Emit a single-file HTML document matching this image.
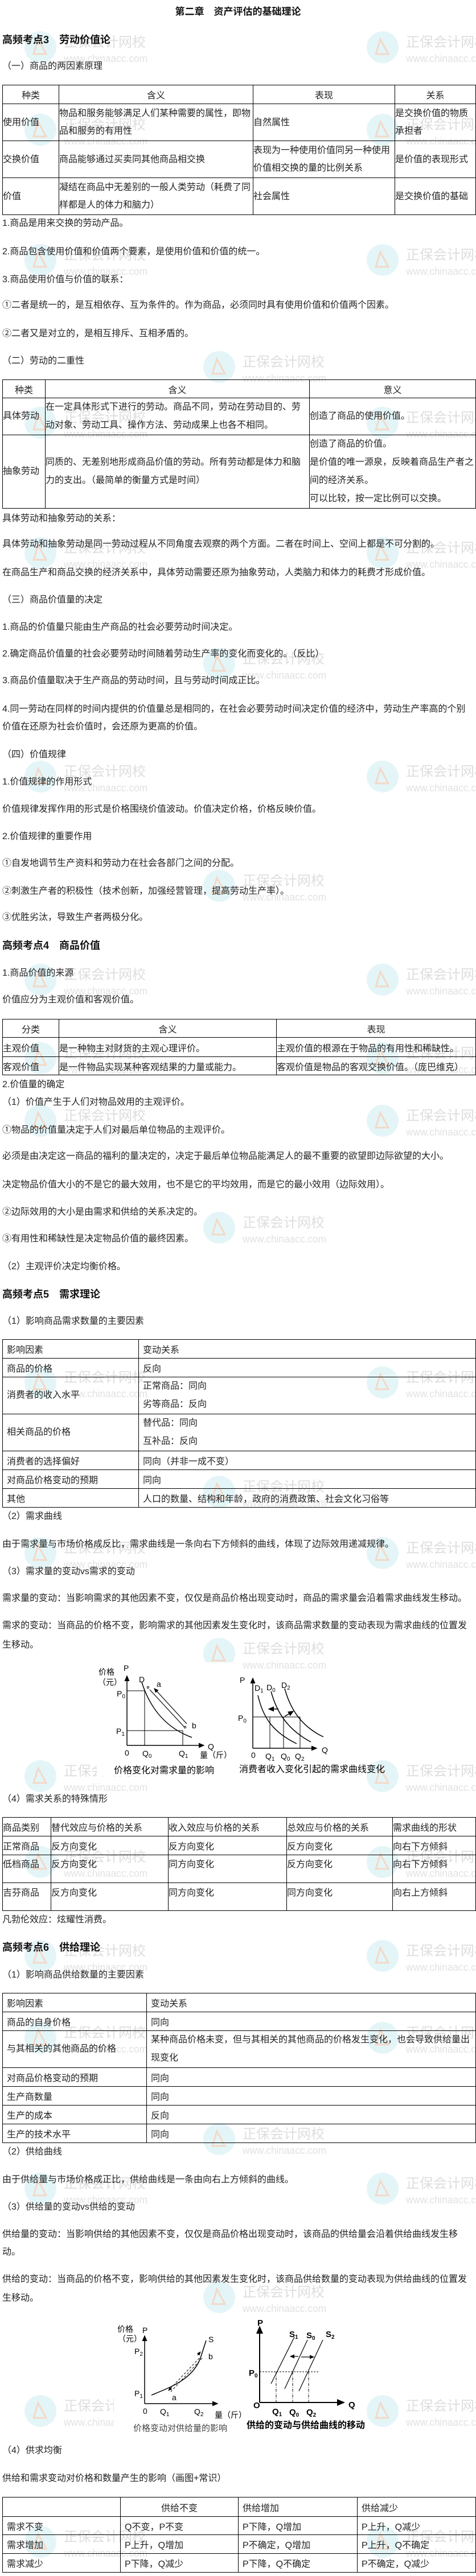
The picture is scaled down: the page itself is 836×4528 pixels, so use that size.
<!DOCTYPE html>
<html lang="zh"><head><meta charset="utf-8">
<style>
html,body{margin:0;padding:0;background:#fff}
#w{position:relative;width:836px;height:4528px;overflow:hidden;font-family:"Liberation Sans","Noto Sans CJK SC",sans-serif;color:#222;font-size:16px}
.p{position:absolute;left:4px;line-height:24px;white-space:nowrap}
.h{position:absolute;left:4px;line-height:26px;white-space:nowrap;font-weight:bold;font-size:18px;color:#111}
table{position:absolute;left:4px;width:832px;border-collapse:collapse;table-layout:fixed;font-size:16px}
td{border:1px solid #000;padding:0;white-space:nowrap;vertical-align:middle;overflow:hidden}
.c{text-align:center}
.pl td{padding-left:7px}
svg{position:absolute;left:0;top:0}
</style></head><body><div id="w">
<svg width="836" height="4528" viewBox="0 0 836 4528" font-family="Liberation Sans,Noto Sans CJK SC,sans-serif">
<defs>
<g id="wm">
<circle cx="0" cy="0" r="28" fill="#e4f5f8"/>
<path d="M-4,-14 L10,12 L-12,12 Z" fill="none" stroke="#f3d9c8" stroke-width="3"/>
<text x="41" y="-1" font-size="24" fill="#dedede">正保会计网校</text>
<text x="41" y="26" font-size="18" fill="#e2e2e2" textLength="147" lengthAdjust="spacingAndGlyphs">www.chinaacc.com</text>
</g>
<marker id="ar" markerWidth="8" markerHeight="8" refX="6" refY="4" orient="auto"><path d="M0,1 L7,4 L0,7 Z" fill="#000"/></marker>
</defs>
<g>
<use href="#wm" x="71" y="83"/><use href="#wm" x="672" y="83"/>
<use href="#wm" x="71" y="228"/><use href="#wm" x="672" y="228"/>
<use href="#wm" x="71" y="457"/><use href="#wm" x="672" y="457"/>
<use href="#wm" x="385" y="645"/>
<use href="#wm" x="71" y="743"/><use href="#wm" x="672" y="743"/>
<use href="#wm" x="71" y="972"/><use href="#wm" x="672" y="972"/>
<use href="#wm" x="385" y="1167"/>
<use href="#wm" x="71" y="1365"/><use href="#wm" x="672" y="1365"/>
<use href="#wm" x="385" y="1557"/>
<use href="#wm" x="71" y="1722"/><use href="#wm" x="672" y="1722"/>
<use href="#wm" x="71" y="1860"/><use href="#wm" x="672" y="1860"/>
<use href="#wm" x="71" y="1970"/><use href="#wm" x="672" y="1970"/>
<use href="#wm" x="385" y="2158"/>
<use href="#wm" x="71" y="2430"/><use href="#wm" x="672" y="2430"/>
<use href="#wm" x="385" y="2622"/>
<use href="#wm" x="71" y="2730"/><use href="#wm" x="672" y="2730"/>
<use href="#wm" x="385" y="2907"/>
<use href="#wm" x="71" y="3122"/><use href="#wm" x="672" y="3122"/>
<use href="#wm" x="71" y="3273"/><use href="#wm" x="672" y="3273"/>
<use href="#wm" x="71" y="3438"/><use href="#wm" x="672" y="3438"/>
<use href="#wm" x="71" y="3582"/><use href="#wm" x="672" y="3582"/>
<use href="#wm" x="385" y="3760"/>
<use href="#wm" x="71" y="3847"/><use href="#wm" x="672" y="3847"/>
<use href="#wm" x="385" y="4038"/>
<use href="#wm" x="71" y="4238"/><use href="#wm" x="672" y="4238"/>
<use href="#wm" x="71" y="4468"/><use href="#wm" x="672" y="4468"/>
</g>
<!-- Demand graph 1 -->
<rect x="170" y="2922" width="240" height="200" fill="#fff"/>
<g stroke="#000" fill="none" stroke-width="1.5">
<line x1="223" y1="3068" x2="223" y2="2946" marker-end="url(#ar)"/>
<line x1="223" y1="3068" x2="358" y2="3068" marker-end="url(#ar)"/>
<line x1="223" y1="2972" x2="254" y2="2972" stroke-width="1"/>
<line x1="254" y1="2972" x2="254" y2="3068" stroke-width="1"/>
<line x1="223" y1="3042" x2="321" y2="3042" stroke-width="1"/>
<line x1="321" y1="3042" x2="321" y2="3068" stroke-width="1"/>
<path d="M249,2957 C262,2998 288,3036 337,3054"/>
<line x1="263" y1="2970" x2="324" y2="3036" stroke-width="1.2"/>
<line x1="328" y1="3030" x2="271" y2="2968" stroke-width="1.2" marker-end="url(#ar)"/>
</g>
<circle cx="260" cy="2966" r="1.6" fill="none" stroke="#000"/>
<circle cx="325" cy="3036" r="1.6" fill="none" stroke="#000"/>
<g font-size="14" fill="#000">
<text x="173" y="2944">价格</text><text x="172" y="2962">（元）</text>
<text x="217" y="2937">P</text><text x="244" y="2957">D</text>
<text x="275" y="2965">a</text><text x="337" y="3038">b</text>
<text x="205" y="2982">P<tspan font-size="10" dy="3">0</tspan></text>
<text x="204" y="3048">P<tspan font-size="10" dy="3">1</tspan></text>
<text x="219" y="3086">0</text>
<text x="250" y="3087">Q<tspan font-size="10" dy="3">0</tspan></text>
<text x="314" y="3087">Q<tspan font-size="10" dy="3">1</tspan></text>
<text x="365" y="3075">Q</text>
<text x="351" y="3090">量（斤）</text>
<text x="200" y="3117" font-size="16">价格变化对需求量的影响</text>
</g>
<!-- Demand graph 2 -->
<g stroke="#000" fill="none" stroke-width="1.5">
<line x1="444" y1="3073" x2="444" y2="2950" marker-end="url(#ar)"/>
<line x1="444" y1="3073" x2="556" y2="3073" marker-end="url(#ar)"/>
<line x1="444" y1="3018" x2="527" y2="3018" stroke-width="1"/>
<line x1="474" y1="3018" x2="474" y2="3073" stroke-width="1"/>
<line x1="498" y1="3018" x2="498" y2="3073" stroke-width="1"/>
<line x1="527" y1="3018" x2="527" y2="3073" stroke-width="1"/>
<path d="M453,2980 C462,3020 480,3045 521,3065"/>
<path d="M476,2973 C486,3010 505,3040 546,3062"/>
<path d="M500,2968 C510,3005 530,3035 568,3053"/>
<line x1="489" y1="3004" x2="472" y2="3004" marker-end="url(#ar)"/>
<line x1="500" y1="3017" x2="515" y2="3008" marker-end="url(#ar)"/>
</g>
<g font-size="14" fill="#000">
<text x="421" y="2958">P</text>
<text x="418" y="3025">P<tspan font-size="10" dy="3">0</tspan></text>
<text x="447" y="2972">D<tspan font-size="10" dy="3">1</tspan></text>
<text x="468" y="2971">D<tspan font-size="10" dy="3">0</tspan></text>
<text x="494" y="2967">D<tspan font-size="10" dy="3">2</tspan></text>
<text x="441" y="3090">0</text>
<text x="466" y="3092">Q<tspan font-size="10" dy="3">1</tspan></text>
<text x="493" y="3092">Q<tspan font-size="10" dy="3">0</tspan></text>
<text x="518" y="3092">Q<tspan font-size="10" dy="3">2</tspan></text>
<text x="565" y="3081">Q</text>
<text x="420" y="3115" font-size="16">消费者收入变化引起的需求曲线变化</text>
</g>
<!-- Supply graph 1 -->
<rect x="200" y="4075" width="230" height="205" fill="#fff"/>
<g stroke="#000" fill="none" stroke-width="1.5">
<line x1="254" y1="4225" x2="254" y2="4106" marker-end="url(#ar)"/>
<line x1="254" y1="4225" x2="382" y2="4225" marker-end="url(#ar)"/>
<path d="M266,4210 C300,4196 340,4182 353,4142 L362,4114"/>
<line x1="350" y1="4145" x2="296" y2="4202" stroke-dasharray="4,3" stroke-width="1" marker-end="url(#ar)"/>
<line x1="355" y1="4145" x2="300" y2="4204" stroke-dasharray="4,3" stroke-width="1"/>
<line x1="347" y1="4140" x2="352" y2="4134" stroke-width="1" marker-end="url(#ar)"/>
</g>
<g font-size="14" fill="#000">
<text x="206" y="4099">价格</text><text x="250" y="4101">P</text>
<text x="207" y="4116">（元）</text>
<text x="236" y="4138">P<tspan font-size="10" dy="3">2</tspan></text>
<text x="236" y="4212">P<tspan font-size="10" dy="3">1</tspan></text>
<text x="366" y="4117">S</text>
<text x="366" y="4147">b</text>
<text x="302" y="4219">a</text>
<text x="251" y="4243">0</text>
<text x="281" y="4244">Q<tspan font-size="10" dy="3">1</tspan></text>
<text x="341" y="4244">Q<tspan font-size="10" dy="3">2</tspan></text>
<text x="377" y="4250">量（斤）</text>
<text x="234" y="4273" font-size="15" fill="#444">价格变动对供给量的影响</text>
</g>
<!-- Supply graph 2 -->
<g stroke="#000" fill="none" stroke-width="2">
<line x1="456" y1="4223" x2="456" y2="4090" marker-end="url(#ar)"/>
<line x1="456" y1="4223" x2="604" y2="4223" marker-end="url(#ar)"/>
<line x1="456" y1="4169" x2="560" y2="4169" stroke-width="1" stroke-dasharray="3,2"/>
<line x1="485" y1="4169" x2="485" y2="4223" stroke-width="1" stroke-dasharray="5,2,1,2"/>
<line x1="514" y1="4169" x2="514" y2="4223" stroke-width="1" stroke-dasharray="5,2,1,2"/>
<line x1="542" y1="4169" x2="542" y2="4223" stroke-width="1" stroke-dasharray="5,2,1,2"/>
<line x1="517" y1="4108" x2="476" y2="4190" stroke-width="1.2"/>
<line x1="540" y1="4113" x2="500" y2="4199" stroke-width="1.2"/>
<line x1="567" y1="4113" x2="525" y2="4203" stroke-width="1.2"/>
<line x1="524" y1="4142" x2="510" y2="4142" stroke-width="1.2" marker-end="url(#ar)"/>
<line x1="529" y1="4143" x2="551" y2="4143" stroke-width="1.2" marker-end="url(#ar)"/>
</g>
<g font-size="15" font-weight="bold" fill="#000">
<text x="452" y="4088">P</text>
<text x="437" y="4176">P<tspan font-size="10" dy="3">0</tspan></text>
<text x="445" y="4233">O</text>
<text x="508" y="4108">S<tspan font-size="10" dy="3">1</tspan></text>
<text x="538" y="4110">S<tspan font-size="10" dy="3">0</tspan></text>
<text x="572" y="4108">S<tspan font-size="10" dy="3">2</tspan></text>
<text x="612" y="4232">Q</text>
<text x="478" y="4244">Q<tspan font-size="10" dy="3">1</tspan></text>
<text x="508" y="4245">Q<tspan font-size="10" dy="3">0</tspan></text>
<text x="538" y="4245">Q<tspan font-size="10" dy="3">2</tspan></text>
<text x="433" y="4268" font-size="16">供给的变动与供给曲线的移动</text>
</g>
</svg>

<div class="h" style="left:0;width:836px;text-align:center;top:8px;font-size:17px">第二章　资产评估的基础理论</div>
<div class="h" style="top:57px">高频考点3　劳动价值论</div>
<div class="p" style="top:105px">（一）商品的两因素原理</div>
<table style="top:149px">
<colgroup><col style="width:99px"><col style="width:341px"><col style="width:249px"><col style="width:142px"></colgroup>
<tr style="height:33px"><td class="c">种类</td><td class="c">含义</td><td class="c">表现</td><td class="c">关系</td></tr>
<tr style="height:65px;line-height:31px"><td>使用价值</td><td>物品和服务能够满足人们某种需要的属性，即物<br>品和服务的有用性</td><td>自然属性</td><td>是交换价值的物质<br>承担者</td></tr>
<tr style="height:65px;line-height:31px"><td>交换价值</td><td>商品能够通过买卖同其他商品相交换</td><td>表现为一种使用价值同另一种使用<br>价值相交换的量的比例关系</td><td>是价值的表现形式</td></tr>
<tr style="height:65px;line-height:31px"><td>价值</td><td>凝结在商品中无差别的一般人类劳动（耗费了同<br>样都是人的体力和脑力）</td><td>社会属性</td><td>是交换价值的基础</td></tr>
</table>
<div class="p" style="top:381px">1.商品是用来交换的劳动产品。</div>
<div class="p" style="top:431px">2.商品包含使用价值和价值两个要素，是使用价值和价值的统一。</div>
<div class="p" style="top:480px">3.商品使用价值与价值的联系：</div>
<div class="p" style="top:525px">①二者是统一的，是互相依存、互为条件的。作为商品，必须同时具有使用价值和价值两个因素。</div>
<div class="p" style="top:575px">②二者又是对立的，是相互排斥、互相矛盾的。</div>
<div class="p" style="top:623px">（二）劳动的二重性</div>
<table style="top:667px">
<colgroup><col style="width:75px"><col style="width:464px"><col style="width:292px"></colgroup>
<tr style="height:32px"><td class="c">种类</td><td class="c">含义</td><td class="c">意义</td></tr>
<tr style="height:65px;line-height:32px"><td>具体劳动</td><td>在一定具体形式下进行的劳动。商品不同，劳动在劳动目的、劳<br>动对象、劳动工具、操作方法、劳动成果上也各不相同。</td><td>创造了商品的使用价值。</td></tr>
<tr style="height:129px;line-height:32px"><td>抽象劳动</td><td>同质的、无差别地形成商品价值的劳动。所有劳动都是体力和脑<br>力的支出。（最简单的衡量方式是时间）</td><td>创造了商品的价值。<br>是价值的唯一源泉，反映着商品生产者之<br>间的经济关系。<br>可以比较，按一定比例可以交换。</td></tr>
</table>
<div class="p" style="top:900px">具体劳动和抽象劳动的关系：</div>
<div class="p" style="top:945px">具体劳动和抽象劳动是同一劳动过程从不同角度去观察的两个方面。二者在时间上、空间上都是不可分割的。</div>
<div class="p" style="top:995px">在商品生产和商品交换的经济关系中，具体劳动需要还原为抽象劳动，人类脑力和体力的耗费才形成价值。</div>
<div class="p" style="top:1043px">（三）商品价值量的决定</div>
<div class="p" style="top:1091px">1.商品的价值量只能由生产商品的社会必要劳动时间决定。</div>
<div class="p" style="top:1138px">2.确定商品价值量的社会必要劳动时间随着劳动生产率的变化而变化的。（反比）</div>
<div class="p" style="top:1185px">3.商品价值量取决于生产商品的劳动时间，且与劳动时间成正比。</div>
<div class="p" style="top:1235px">4.同一劳动在同样的时间内提供的价值量总是相同的，在社会必要劳动时间决定价值的经济中，劳动生产率高的个别</div>
<div class="p" style="top:1266px">价值在还原为社会价值时，会还原为更高的价值。</div>
<div class="p" style="top:1315px">（四）价值规律</div>
<div class="p" style="top:1363px">1.价值规律的作用形式</div>
<div class="p" style="top:1411px">价值规律发挥作用的形式是价格围绕价值波动。价值决定价格，价格反映价值。</div>
<div class="p" style="top:1459px">2.价值规律的重要作用</div>
<div class="p" style="top:1506px">①自发地调节生产资料和劳动力在社会各部门之间的分配。</div>
<div class="p" style="top:1555px">②刺激生产者的积极性（技术创新，加强经营管理，提高劳动生产率）。</div>
<div class="p" style="top:1601px">③优胜劣汰，导致生产者两极分化。</div>
<div class="h" style="top:1649px">高频考点4　商品价值</div>
<div class="p" style="top:1699px">1.商品价值的来源</div>
<div class="p" style="top:1746px">价值应分为主观价值和客观价值。</div>
<table style="top:1791px">
<colgroup><col style="width:99px"><col style="width:382px"><col style="width:350px"></colgroup>
<tr style="height:32px"><td class="c">分类</td><td class="c">含义</td><td class="c">表现</td></tr>
<tr style="height:34px"><td>主观价值</td><td>是一种物主对财货的主观心理评价。</td><td>主观价值的根源在于物品的有用性和稀缺性。</td></tr>
<tr style="height:32px"><td>客观价值</td><td>是一件物品实现某种客观结果的力量或能力。</td><td>客观价值是物品的客观交换价值。（庞巴维克）</td></tr>
</table>
<div class="p" style="top:1895px">2.价值量的确定</div>
<div class="p" style="top:1926px">（1）价值产生于人们对物品效用的主观评价。</div>
<div class="p" style="top:1975px">①物品的价值量决定于人们对最后单位物品的主观评价。</div>
<div class="p" style="top:2021px">必须是由决定这一商品的福利的量决定的，决定于最后单位物品能满足人的最不重要的欲望即边际欲望的大小。</div>
<div class="p" style="top:2071px">决定物品价值大小的不是它的最大效用，也不是它的平均效用，而是它的最小效用（边际效用）。</div>
<div class="p" style="top:2119px">②边际效用的大小是由需求和供给的关系决定的。</div>
<div class="p" style="top:2166px">③有用性和稀缺性是决定物品价值的最终因素。</div>
<div class="p" style="top:2215px">（2）主观评价决定均衡价格。</div>
<div class="h" style="top:2262px">高频考点5　需求理论</div>
<div class="p" style="top:2311px">（1）影响商品需求数量的主要因素</div>
<table class="pl" style="top:2354px">
<colgroup><col style="width:239px"><col style="width:592px"></colgroup>
<tr style="height:33px"><td>影响因素</td><td>变动关系</td></tr>
<tr style="height:33px"><td>商品的价格</td><td>反向</td></tr>
<tr style="height:65px;line-height:32px"><td>消费者的收入水平</td><td>正常商品：同向<br>劣等商品：反向</td></tr>
<tr style="height:65px;line-height:32px"><td>相关商品的价格</td><td>替代品：同向<br>互补品：反向</td></tr>
<tr style="height:33px"><td>消费者的选择偏好</td><td>同向（并非一成不变）</td></tr>
<tr style="height:33px"><td>对商品价格变动的预期</td><td>同向</td></tr>
<tr style="height:33px"><td>其他</td><td>人口的数量、结构和年龄，政府的消费政策、社会文化习俗等</td></tr>
</table>
<div class="p" style="top:2654px">（2）需求曲线</div>
<div class="p" style="top:2703px">由于需求量与市场价格成反比，需求曲线是一条向右下方倾斜的曲线，体现了边际效用递减规律。</div>
<div class="p" style="top:2751px">（3）需求量的变动vs需求的变动</div>
<div class="p" style="top:2798px">需求量的变动：当影响需求的其他因素不变，仅仅是商品价格出现变动时，商品的需求量会沿着需求曲线发生移动。</div>
<div class="p" style="top:2846px">需求的变动：当商品的价格不变，影响需求的其他因素发生变化时，该商品需求数量的变动表现为需求曲线的位置发</div>
<div class="p" style="top:2880px">生移动。</div>
<div class="p" style="top:3151px">（4）需求关系的特殊情形</div>
<table style="top:3194px">
<colgroup><col style="width:85px"><col style="width:206px"><col style="width:208px"><col style="width:186px"><col style="width:146px"></colgroup>
<tr style="height:33px"><td>商品类别</td><td>替代效应与价格的关系</td><td>收入效应与价格的关系</td><td>总效应与价格的关系</td><td>需求曲线的形状</td></tr>
<tr style="height:33px"><td>正常商品</td><td>反方向变化</td><td>反方向变化</td><td>反方向变化</td><td>向右下方倾斜</td></tr>
<tr style="height:49px;vertical-align:top"><td style="vertical-align:top;line-height:34px">低档商品</td><td style="vertical-align:top;line-height:34px">反方向变化</td><td style="vertical-align:top;line-height:34px">同方向变化</td><td style="vertical-align:top;line-height:34px">反方向变化</td><td style="vertical-align:top;line-height:34px">向右下方倾斜</td></tr>
<tr style="height:49px"><td style="vertical-align:top;line-height:36px">吉芬商品</td><td style="vertical-align:top;line-height:36px">反方向变化</td><td style="vertical-align:top;line-height:36px">同方向变化</td><td style="vertical-align:top;line-height:36px">同方向变化</td><td style="vertical-align:top;line-height:36px">向右上方倾斜</td></tr>
</table>
<div class="p" style="top:3363px">凡勃伦效应：炫耀性消费。</div>
<div class="h" style="top:3410px">高频考点6　供给理论</div>
<div class="p" style="top:3460px">（1）影响商品供给数量的主要因素</div>
<table class="pl" style="top:3503px">
<colgroup><col style="width:253px"><col style="width:578px"></colgroup>
<tr style="height:33px"><td>影响因素</td><td>变动关系</td></tr>
<tr style="height:33px"><td>商品的自身价格</td><td>同向</td></tr>
<tr style="height:65px;line-height:32px"><td>与其相关的其他商品的价格</td><td>某种商品价格未变，但与其相关的其他商品的价格发生变化，也会导致供给量出<br>现变化</td></tr>
<tr style="height:33px"><td>对商品价格变动的预期</td><td>同向</td></tr>
<tr style="height:33px"><td>生产商数量</td><td>同向</td></tr>
<tr style="height:33px"><td>生产的成本</td><td>反向</td></tr>
<tr style="height:33px"><td>生产的技术水平</td><td>同向</td></tr>
</table>
<div class="p" style="top:3771px">（2）供给曲线</div>
<div class="p" style="top:3820px">由于供给量与市场价格成正比，供给曲线是一条由向右上方倾斜的曲线。</div>
<div class="p" style="top:3868px">（3）供给量的变动vs供给的变动</div>
<div class="p" style="top:3916px">供给量的变动：当影响供给的其他因素不变，仅仅是商品价格出现变动时，该商品的供给量会沿着供给曲线发生移</div>
<div class="p" style="top:3947px">动。</div>
<div class="p" style="top:3995px">供给的变动：当商品的价格不变，影响供给的其他因素发生变化时，该商品供给数量的变动表现为供给曲线的位置发</div>
<div class="p" style="top:4028px">生移动。</div>
<div class="p" style="top:4296px">（4）供求均衡</div>
<div class="p" style="top:4345px">供给和需求变动对价格和数量产生的影响（画图+常识）</div>
<table class="pl" style="top:4389px">
<colgroup><col style="width:207px"><col style="width:207px"><col style="width:209px"><col style="width:208px"></colgroup>
<tr style="height:34px"><td></td><td class="c" style="padding-left:0">供给不变</td><td>供给增加</td><td>供给减少</td></tr>
<tr style="height:32px"><td>需求不变</td><td>Q不变，P不变</td><td>P下降，Q增加</td><td>P上升，Q减少</td></tr>
<tr style="height:33px"><td>需求增加</td><td>P上升，Q增加</td><td>P不确定，Q增加</td><td>P上升，Q不确定</td></tr>
<tr style="height:33px"><td>需求减少</td><td>P下降，Q减少</td><td>P下降，Q不确定</td><td>P不确定，Q减少</td></tr>
</table>
</div></body></html>
